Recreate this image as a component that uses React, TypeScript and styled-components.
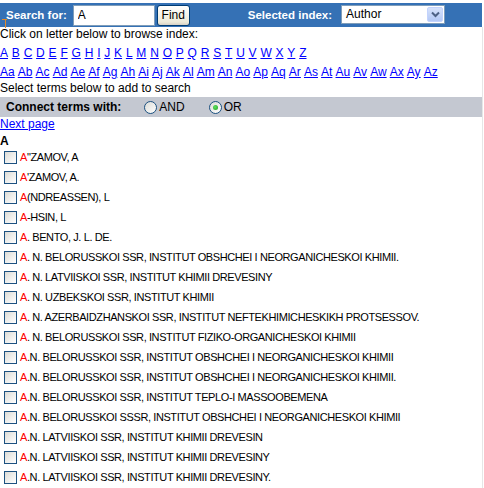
import React from 'react';
import styled, { createGlobalStyle } from 'styled-components';

const GlobalStyle = createGlobalStyle`
  html, body {
    margin: 0;
    padding: 0;
    background: #ffffff;
  }
  body {
    font-family: 'Liberation Sans', Arial, sans-serif;
    font-size: 12px;
    color: #000000;
  }
`;

const letters = 'ABCDEFGHIJKLMNOPQRSTUVWXYZ'.split('');
const pairs = 'abcdefghijklmnopqrstuvwxyz'.split('').map((c) => 'A' + c);

const terms = [
  '"ZAMOV, A',
  "'ZAMOV, A.",
  '(NDREASSEN), L',
  '-HSIN, L',
  '. BENTO, J. L. DE.',
  '. N. BELORUSSKOI SSR, INSTITUT OBSHCHEI I NEORGANICHESKOI KHIMII.',
  '. N. LATVIISKOI SSR, INSTITUT KHIMII DREVESINY',
  '. N. UZBEKSKOI SSR, INSTITUT KHIMII',
  '. N. AZERBAIDZHANSKOI SSR, INSTITUT NEFTEKHIMICHESKIKH PROTSESSOV.',
  '. N. BELORUSSKOI SSR, INSTITUT FIZIKO-ORGANICHESKOI KHIMII',
  '.N. BELORUSSKOI SSR, INSTITUT OBSHCHEI I NEORGANICHESKOI KHIMII',
  '.N. BELORUSSKOI SSR, INSTITUT OBSHCHEI I NEORGANICHESKOI KHIMII.',
  '.N. BELORUSSKOI SSR, INSTITUT TEPLO-I MASSOOBEMENA',
  '.N. BELORUSSKOI SSSR, INSTITUT OBSHCHEI I NEORGANICHESKOI KHIMII',
  '.N. LATVIISKOI SSR, INSTITUT KHIMII DREVESIN',
  '.N. LATVIISKOI SSR, INSTITUT KHIMII DREVESINY',
  '.N. LATVIISKOI SSR, INSTITUT KHIMII DREVESINY.',
];

export default function App() {
  return (
    <>
      <GlobalStyle />
      <Page>
        <SearchBar>
          <BarLabel>Search for:</BarLabel>
          <SearchInput defaultValue="A" />
          <FindButton>Find</FindButton>
          <BarLabel $gap={58} $after={9}>
            Selected index:
          </BarLabel>
          <IndexSelect>
            <span>Author</span>
            <SelectArrow>
              <svg width="9" height="7" viewBox="0 0 9 7">
                <path d="M1 1.5 L4.5 5 L8 1.5" fill="none" stroke="#4d6185" strokeWidth="2" />
              </svg>
            </SelectArrow>
          </IndexSelect>
          <CursorMark />
        </SearchBar>

        <Hint $top={1} $line={12}>
          Click on letter below to browse index:
        </Hint>
        <LinkRow $gap={3.8} $top={4}>
          {letters.map((l) => (
            <IndexLink key={l} href="#">
              {l}
            </IndexLink>
          ))}
        </LinkRow>
        <LinkRow $gap={3.1}>
          {pairs.map((p) => (
            <IndexLink key={p} href="#">
              {p}
            </IndexLink>
          ))}
        </LinkRow>
        <Hint $line={13}>Select terms below to add to search</Hint>

        <ConnectBar>
          <ConnectLabel>Connect terms with:</ConnectLabel>
          <RadioOption $gap={23}>
            <Radio />
            AND
          </RadioOption>
          <RadioOption $gap={24}>
            <Radio $checked />
            OR
          </RadioOption>
        </ConnectBar>

        <NextLink href="#">Next page</NextLink>
        <GroupHeading>A</GroupHeading>

        <TermList>
          {terms.map((t, i) => (
            <TermRow key={i}>
              <CheckBox />
              <TermText>
                <Hit>A</Hit>
                {t}
              </TermText>
            </TermRow>
          ))}
        </TermList>
      </Page>
    </>
  );
}

const Page = styled.div`
  position: relative;
  width: 484px;
  height: 488px;
  overflow: hidden;
  box-sizing: border-box;
  padding-top: 3px;
  &::after {
    content: '';
    position: absolute;
    right: 1px;
    top: 27px;
    bottom: 0;
    width: 1px;
    background: #e6e6e6;
  }
`;

const SearchBar = styled.div`
  position: relative;
  display: flex;
  align-items: center;
  height: 24px;
  width: 482px;
  background: #3571b5;
  padding-left: 6px;
  box-sizing: border-box;
`;

const BarLabel = styled.span<{ $gap?: number; $after?: number }>`
  color: #ffffff;
  font-weight: bold;
  font-size: 11.5px;
  margin-left: ${({ $gap }) => $gap ?? 0}px;
  margin-right: ${({ $after }) => $after ?? 6}px;
`;

const SearchInput = styled.input`
  width: 82px;
  height: 21px;
  box-sizing: border-box;
  border: 1px solid #7f9db9;
  padding: 0 4px;
  font-family: 'Liberation Sans', Arial, sans-serif;
  font-size: 12px;
  outline: none;
  margin-right: 2px;
`;

const FindButton = styled.button`
  width: 33px;
  height: 21px;
  box-sizing: border-box;
  border: 1px solid #003c74;
  border-radius: 3px;
  background: linear-gradient(#ffffff, #ece9d8 85%, #d6d0c5);
  font-family: 'Liberation Sans', Arial, sans-serif;
  font-size: 12px;
  padding: 0;
  color: #000;
`;

const IndexSelect = styled.div`
  display: flex;
  align-items: center;
  justify-content: space-between;
  width: 104px;
  height: 19px;
  box-sizing: border-box;
  border: 1px solid #7f9db9;
  background: #ffffff;
  padding: 0 1px 0 4px;
  font-size: 12px;
  margin-top: -2px;
`;

const SelectArrow = styled.div`
  display: flex;
  align-items: center;
  justify-content: center;
  width: 16px;
  height: 15px;
  border-radius: 2px;
  background: linear-gradient(#d6e2fb, #b3c8f5);
  border: 1px solid #c3d3fd;
  box-sizing: border-box;
`;

const CursorMark = styled.div`
  position: absolute;
  left: 5px;
  top: 16px;
  width: 1px;
  height: 9px;
  background: #e08a2c;
  &::before {
    content: '';
    position: absolute;
    left: -3px;
    top: 0;
    width: 5px;
    height: 1px;
    background: #e08a2c;
  }
`;

const Hint = styled.div<{ $top?: number; $line: number }>`
  font-size: 12px;
  line-height: ${({ $line }) => $line}px;
  height: ${({ $line }) => $line}px;
  margin-top: ${({ $top }) => $top ?? 0}px;
`;

const LinkRow = styled.div<{ $gap: number; $top?: number }>`
  display: flex;
  column-gap: ${({ $gap }) => $gap}px;
  line-height: 19px;
  height: 19px;
  font-size: 12px;
  margin-top: ${({ $top }) => $top ?? 0}px;
  white-space: nowrap;
`;

const IndexLink = styled.a`
  color: #0000ff;
  text-decoration: underline;
`;

const ConnectBar = styled.div`
  display: flex;
  align-items: center;
  height: 20px;
  width: 482px;
  background: #c4c8d1;
  padding-left: 6px;
  box-sizing: border-box;
  margin-top: 2px;
`;

const ConnectLabel = styled.span`
  font-weight: bold;
  font-size: 12px;
`;

const RadioOption = styled.span<{ $gap: number }>`
  display: flex;
  align-items: center;
  gap: 2px;
  font-size: 12px;
  margin-left: ${({ $gap }) => $gap}px;
`;

const Radio = styled.span<{ $checked?: boolean }>`
  position: relative;
  width: 13px;
  height: 13px;
  box-sizing: border-box;
  border-radius: 50%;
  border: 1px solid #1c5180;
  background: linear-gradient(135deg, #dcdcd7, #ffffff);
  &::after {
    content: '';
    display: ${({ $checked }) => ($checked ? 'block' : 'none')};
    position: absolute;
    left: 3px;
    top: 3px;
    width: 5px;
    height: 5px;
    border-radius: 50%;
    background: radial-gradient(circle at 40% 40%, #5ee05e, #21a121);
  }
`;

const NextLink = styled.a`
  display: block;
  color: #0000ff;
  text-decoration: underline;
  font-size: 12px;
  line-height: 13px;
  margin-top: 1px;
`;

const GroupHeading = styled.div`
  font-weight: bold;
  font-size: 12px;
  line-height: 16px;
  margin-top: 2px;
`;

const TermList = styled.div`
  display: flex;
  flex-direction: column;
  padding-left: 4px;
  margin-top: -2px;
`;

const TermRow = styled.div`
  display: flex;
  align-items: center;
  gap: 3px;
  height: 20px;
`;

const CheckBox = styled.span`
  width: 13px;
  height: 13px;
  box-sizing: border-box;
  border: 1px solid #1c5180;
  background: linear-gradient(135deg, #dcdcd7, #ffffff);
  flex: none;
`;

const TermText = styled.span`
  font-size: 11px;
  letter-spacing: -0.4px;
  white-space: nowrap;
`;

const Hit = styled.span`
  color: #ff0000;
`;
